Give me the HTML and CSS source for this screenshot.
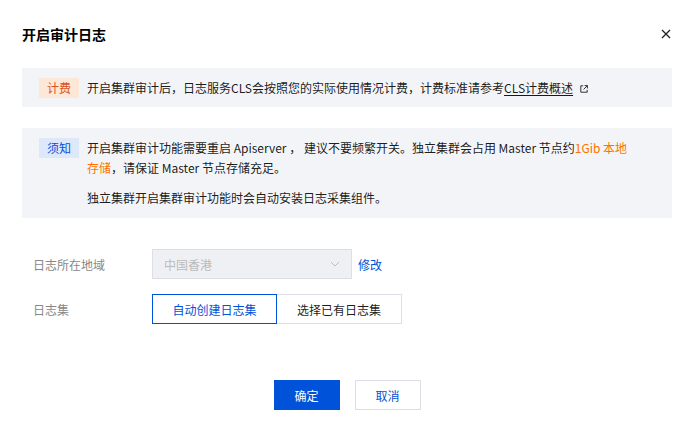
FILE: index.html
```html
<!DOCTYPE html>
<html lang="zh-CN">
<head>
<meta charset="utf-8">
<title>开启审计日志</title>
<link rel="stylesheet" href="styles.css">
</head>
<body>
<div class="dialog">
  <div class="header">
    <h1 class="title">开启审计日志</h1>
    <button class="close" aria-label="关闭">
      <svg width="10" height="10" viewBox="0 0 10 10"><path d="M1 1L9 9M9 1L1 9" stroke="#222" stroke-width="1.3" fill="none"/></svg>
    </button>
  </div>

  <div class="notice">
    <span class="tag tag-warn">计费</span>
    <div class="notice-body">
      <p>开启集群审计后，日志服务CLS会按照您的实际使用情况计费，计费标准请参考<a class="doc-link" href="#">CLS计费概述</a><svg class="ext" width="8" height="8" viewBox="0 0 8 8"><path d="M3.2 0.8H0.8V7.2H7.2V4.8" stroke="#333" stroke-width="1" fill="none"/><path d="M4.6 0.6H7.4V3.4M7.4 0.6L3.6 4.4" stroke="#333" stroke-width="1" fill="none"/></svg></p>
    </div>
  </div>

  <div class="notice notice-tall">
    <span class="tag tag-info">须知</span>
    <div class="notice-body">
      <p>开启集群审计功能需要重启 Apiserver ， 建议不要频繁开关。独立集群会占用 Master 节点约<span class="hl">1Gib 本地<br>存储</span>，请保证 Master 节点存储充足。</p>
      <p class="para">独立集群开启集群审计功能时会自动安装日志采集组件。</p>
    </div>
  </div>

  <div class="form">
    <div class="row">
      <label class="label">日志所在地域</label>
      <div class="control">
        <div class="select">
          <span>中国香港</span>
          <svg width="10" height="6" viewBox="0 0 10 6"><path d="M1 1L5 5L9 1" stroke="#bbb" stroke-width="1" fill="none"/></svg>
        </div>
        <a class="link" href="#">修改</a>
      </div>
    </div>
    <div class="row">
      <label class="label">日志集</label>
      <div class="control">
        <div class="seg">
          <button class="seg-btn active">自动创建日志集</button>
          <button class="seg-btn">选择已有日志集</button>
        </div>
      </div>
    </div>
  </div>

  <div class="footer">
    <button class="btn btn-primary">确定</button>
    <button class="btn btn-default">取消</button>
  </div>
</div>
</body>
</html>
```

FILE: styles.css
```css
* { box-sizing: border-box; }
html, body { margin: 0; padding: 0; background: #fff; }
body {
  font-family: "Noto Sans CJK SC", "Noto Sans", sans-serif;
  font-size: 12px;
  color: rgba(0, 0, 0, 0.9);
}
.dialog {
  width: 696px;
  height: 433px;
  padding: 24px 24px 0 22px;
}
.header {
  display: flex;
  align-items: center;
  justify-content: space-between;
  height: 20px;
  margin-bottom: 24px;
}
.title {
  margin: 0;
  font-size: 14px;
  font-weight: 700;
  line-height: 20px;
  color: #000;
}
.close {
  border: 0;
  background: none;
  padding: 0;
  width: 10px;
  height: 10px;
  margin-right: 1px;
  display: flex;
  cursor: pointer;
}
.notice {
  display: flex;
  align-items: flex-start;
  background: #f3f4f7;
  padding: 10px 10px 9px 17px;
  margin-bottom: 21px;
}
.tag {
  flex: none;
  width: 40px;
  height: 20px;
  line-height: 20px;
  text-align: center;
  font-size: 12px;
  margin-right: 8px;
}
.tag-warn { background: #fde8d8; color: #d9531e; }
.tag-info { background: #dde8fb; color: #0052d9; }
.notice-body { flex: 1; }
.notice-body p { margin: 0; line-height: 20px; }
.notice-body .para { margin-top: 10px; }
.notice-tall { padding-bottom: 10px; }
.doc-link { color: rgba(0, 0, 0, 0.9); text-decoration: underline; text-underline-offset: 2px; }
.ext { margin-left: 7px; }
.hl { color: #ff7200; }
.form { padding-left: 11px; margin-top: 31px; }
.row {
  display: flex;
  align-items: center;
  height: 30px;
  margin-bottom: 15px;
}
.label {
  width: 119px;
  flex: none;
  color: #888;
}
.control { display: flex; align-items: center; }
.select {
  width: 200px;
  height: 30px;
  background: #eff0f4;
  border: 1px solid #dcdfe6;
  color: #bbb;
  display: flex;
  align-items: center;
  justify-content: space-between;
  padding: 0 11px 0 11px;
}
.link { color: #0052d9; text-decoration: none; margin-left: 6px; }
.seg { display: flex; }
.seg-btn {
  width: 125px;
  height: 30px;
  font: inherit;
  font-size: 12px;
  background: #fff;
  border: 1px solid #dcdfe6;
  color: rgba(0, 0, 0, 0.9);
  padding: 0;
}
.seg-btn + .seg-btn { border-left: 0; }
.seg-btn.active { border-color: #0052d9; color: #0052d9; }
.footer {
  display: flex;
  justify-content: center;
  gap: 15px;
  margin-top: 56px;
}
.btn {
  width: 66px;
  height: 30px;
  font: inherit;
  font-size: 12px;
  padding: 0;
}
.btn-primary { background: #0052d9; border: 1px solid #0052d9; color: #fff; }
.btn-default { background: #fff; border: 1px solid #dcdfe6; color: #0052d9; }
```
